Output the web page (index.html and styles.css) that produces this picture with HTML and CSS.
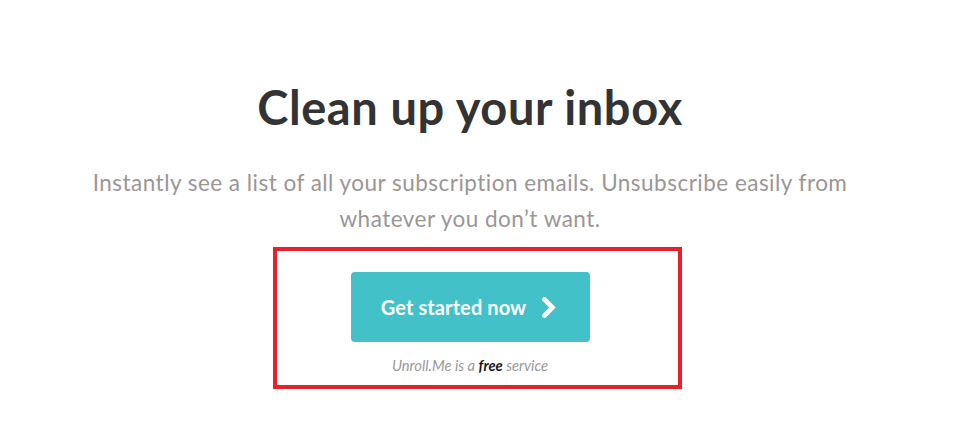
FILE: index.html
```html
<!DOCTYPE html>
<html>
<head>
<meta charset="utf-8">
<link rel="stylesheet" href="styles.css">
</head>
<body>
<main class="page">
  <h1 class="title">Clean up your inbox</h1>
  <p class="lead">Instantly see a list of all your subscription emails. Unsubscribe easily from<br>whatever you don’t want.</p>
  <div class="cta">
    <a class="btn" href="#">Get started now
      <svg class="chev" width="14" height="21" viewBox="0 0 14 21"><path d="M2.5 2.5 L10.5 10.5 L2.5 18.5" fill="none" stroke="#fff" stroke-width="4.6" stroke-linecap="square" stroke-linejoin="miter"/></svg>
    </a>
    <p class="note">Unroll.Me is a <b>free</b> service</p>
  </div>
</main>
<div class="highlight"></div>
</body>
</html>
```
FILE: styles.css
```css
html, body { margin: 0; padding: 0; background: #fff; }
body { font-family: Lato, "Open Sans", sans-serif; position: relative; height: 423px; overflow: hidden; }
.page { width: 940px; text-align: center; padding-top: 79px; }
.title { margin: 0; font-size: 47px; font-weight: 700; color: #333; line-height: 56px; letter-spacing: 0.6px; }
.lead { margin: 30px 0 0; font-size: 22.5px; line-height: 36px; color: #9a9696; letter-spacing: 0.48px; }
.cta { display: flex; flex-direction: column; align-items: center; margin-top: 35px; }
.btn { display: flex; align-items: center; justify-content: center; gap: 16px; width: 239px; height: 70px; padding-right: 3px; box-sizing: border-box; background: #43c1c8; border-radius: 4px; color: #fff; font-weight: 700; font-size: 20px; letter-spacing: 0.1px; text-decoration: none; }
.chev { display: block; margin-top: 1px; }
.note { margin: 14px 0 0; font-size: 14.7px; font-style: italic; color: #999; }
.note b { color: #1a1a1a; font-weight: 700; }
.highlight { position: absolute; left: 273px; top: 247px; width: 409px; height: 142px; box-sizing: border-box; border: 4.5px solid #e8202a; }
```
